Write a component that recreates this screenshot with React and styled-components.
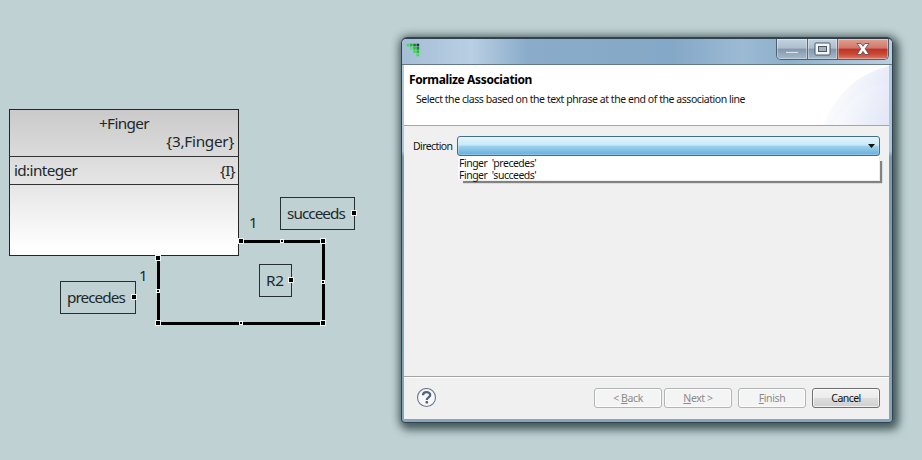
import React from 'react';
import styled, { createGlobalStyle } from 'styled-components';

const GlobalStyle = createGlobalStyle`
  * { box-sizing: border-box; }
  body { margin: 0; background: #bfd1d3; overflow: hidden; }
`;

const Desktop = styled.main`
  position: relative;
  width: 922px;
  height: 460px;
  overflow: hidden;
  background: #bfd1d3;
  color: #20282b;
  font-family: 'Noto Sans', sans-serif;
`;

const ClassNode = styled.section`
  position: absolute;
  left: 9px;
  top: 109px;
  width: 230px;
  height: 147px;
  border: 1px solid #252525;
  background: linear-gradient(#cacaca, #e6e6e6 52%, #fff 96%);
  font-size: 15.3px;
  line-height: 18px;
`;

const ClassHead = styled.header`
  display: flex;
  flex-direction: column;
  height: 47px;
  padding: 4px 4px 0;
  border-bottom: 1px solid #333;
`;

const ClassName = styled.div`
  text-align: center;
  letter-spacing: -0.62px;
`;

const Constraint = styled.div`
  text-align: right;
  letter-spacing: -0.25px;
`;

const Attribute = styled.div`
  display: flex;
  justify-content: space-between;
  height: 28px;
  padding: 4px 3px 0 4px;
  border-bottom: 1px solid #333;
  letter-spacing: -0.62px;
`;

const PhraseNode = styled.div`
  position: absolute;
  left: ${(p) => p.$x}px;
  top: ${(p) => p.$y}px;
  width: ${(p) => p.$w}px;
  height: 33px;
  border: 1px solid #263033;
  padding: 6px 0 0 6px;
  font-size: 15.3px;
  line-height: 18px;
  letter-spacing: ${(p) => p.$tracking}px;
  white-space: nowrap;
`;

const Multiplicity = styled.div`
  position: absolute;
  left: ${(p) => p.$x}px;
  top: ${(p) => p.$y}px;
  font-size: 15px;
  line-height: 18px;
`;

const Connector = styled.svg`
  position: absolute;
  left: 0;
  top: 0;
`;

const Window = styled.section`
  position: absolute;
  left: 401px;
  top: 37px;
  width: 492px;
  height: 386px;
  display: flex;
  flex-direction: column;
  border: 1px solid #31424e;
  border-top-width: 2px;
  border-radius: 6px 6px 4px 4px;
  padding: 0 3px 3px 2px;
  background: linear-gradient(#b7cde1 0, #a9c4de 112px, #7b98ad 118px, #86a6bc 100%);
  box-shadow: 3px 4px 9px 3px rgba(25, 45, 45, 0.62), 0 0 8px 2px rgba(40, 60, 60, 0.4);
  color: #151515;
`;

const TitleBar = styled.header`
  display: flex;
  justify-content: space-between;
  flex: none;
  height: 26px;
  margin: 0 -3px 0 -2px;
  padding: 0 3px 0 2px;
  border-bottom: 1px solid #65798a;
  border-radius: 4px 4px 0 0;
  background: linear-gradient(90deg, #a4bed6 0, #b9cfe3 70px, #8aacca 125px, #84a8c7 270px, #9cbad4 340px, #8db0cb 385px, #b8cfe2 100%);
`;

const Controls = styled.div`
  display: flex;
  height: 21px;
  border: 1px solid #4e6070;
  border-top: 0;
  border-radius: 0 0 5px 5px;
  overflow: hidden;
`;

const ControlButton = styled.button`
  display: flex;
  align-items: center;
  justify-content: center;
  width: ${(p) => p.$w}px;
  padding: 0;
  border: 0;
  border-right: ${(p) => (p.$close ? '0' : '1px solid #586a7b')};
  background: ${(p) =>
    p.$close
      ? 'linear-gradient(#e0a091, #d17767 46%, #bc3327 50%, #c94736 75%, #dc7b61)'
      : 'linear-gradient(#c5d3df, #acbdcc 46%, #8397ad 50%, #a5bacd)'};
  box-shadow: inset 0 0 0 1px rgba(255, 255, 255, 0.35);
`;

const Content = styled.div`
  display: flex;
  flex-direction: column;
  flex: 1;
  background: #f0f0f0;
`;

const Banner = styled.header`
  position: relative;
  flex: none;
  height: 61px;
  padding: 7px 0 0 5px;
  background: #fff;
  border-bottom: 1px solid #a4a6a8;
`;

const BannerArt = styled.svg`
  position: absolute;
  right: 0;
  top: 0;
`;

const Heading = styled.h1`
  position: relative;
  margin: 0;
  font-size: 12px;
  line-height: 16px;
  letter-spacing: -0.36px;
  color: #000;
`;

const Description = styled.p`
  position: relative;
  margin: 4px 0 0 7px;
  font-size: 10.5px;
  line-height: 15px;
  letter-spacing: -0.445px;
`;

const Form = styled.div`
  display: flex;
  flex: 1;
  padding: 10px 9px 0;
`;

const FieldLabel = styled.label`
  width: 44px;
  font-size: 10.5px;
  line-height: 20px;
  letter-spacing: -0.6px;
`;

const Picker = styled.div`
  flex: 1;
`;

const Combo = styled.div`
  display: flex;
  align-items: center;
  justify-content: flex-end;
  height: 20px;
  padding-right: 4px;
  border: 1px solid #416e8b;
  border-radius: 3px;
  background: linear-gradient(#e5f5fd, #c8e9f8 45%, #9dd2ee 51%, #66addb);
  box-shadow: inset 0 0 0 1px rgba(230, 250, 255, 0.3);
`;

const Options = styled.ul`
  height: 25px;
  margin: 0;
  padding: 1px 1px 0;
  list-style: none;
  background: #fff;
  border: 1px solid #eee;
  border-top: 0;
  box-shadow: 2px 2px 1px rgba(70, 70, 70, 0.65);
  clip-path: polygon(0 0, 100% 0, 100% 5px, 426px 5px, 426px 29px, 6px 29px, 6px 25px, 0 25px);
`;

const Option = styled.li`
  font-size: 10.5px;
  line-height: 12px;
  letter-spacing: -0.5px;
  white-space: pre;
`;

const Footer = styled.footer`
  display: flex;
  align-items: flex-start;
  height: 43px;
  padding: 11px 9px 0 12px;
  border-top: 1px solid #9fa3a5;
  box-shadow: inset 0 1px #fff;
`;

const Actions = styled.div`
  display: flex;
  gap: ${(p) => p.$gap}px;
  margin-left: ${(p) => p.$left};
`;

const Action = styled.button`
  width: 68px;
  height: 20px;
  padding: 1px 0 0;
  border: 1px solid ${(p) => (p.disabled ? '#b2b5b5' : '#707070')};
  border-radius: 3px;
  background: ${(p) => (p.disabled ? '#f4f4f4' : 'linear-gradient(#f3f3f3, #ebebeb 49%, #dddddd 51%, #cfcfcf)')};
  box-shadow: inset 0 0 0 1px rgba(255, 255, 255, 0.7);
  color: ${(p) => (p.disabled ? '#8b8b8b' : '#111')};
  font: 10.5px/17px 'Noto Sans', sans-serif;
  letter-spacing: ${(p) => (p.disabled ? '-0.4px' : '-0.55px')};
`;

const corners = [[241, 241], [323, 241], [323, 323], [158, 323], [158, 258], [354, 213], [291, 280], [134, 297]];
const midpoints = [[282, 241], [323, 282], [241, 323], [158, 291]];

function AssociationLine() {
  return (
    <Connector width="400" height="460" aria-hidden="true" shapeRendering="crispEdges">
      <path d="M241 241H323V323.5H158V258" fill="none" stroke="#000" strokeWidth="3" />
      {corners.map(([x, y]) => (
        <g key={`${x}-${y}`}>
          <rect x={x - 3} y={y - 3} width="6" height="6" fill="#eef5f5" />
          <rect x={x - 2} y={y - 2} width="4" height="4" fill="#000" />
        </g>
      ))}
      {midpoints.map(([x, y]) => (
        <g key={`${x}-${y}`}>
          <rect x={x - 2} y={y - 2} width="4" height="4" fill="#fff" />
          <rect x={x - 1} y={y - 1} width="2" height="2" fill="#000" />
        </g>
      ))}
    </Connector>
  );
}

const logoDots = [
  [1, 0, '#4fd55f'], [4, 0, '#21b936'], [7, 0, '#158326'], [10, 0, '#104d1b'],
  [4, 3, '#5fe36b'], [7, 3, '#20cb34'], [10, 3, '#168c26'],
  [7, 6, '#3fdf4c'], [10, 6, '#19c52e'], [10, 9, '#45dc50'],
];

function AppLogo() {
  return (
    <svg width="18" height="20" aria-hidden="true">
      {logoDots.map(([x, y, fill]) => (
        <rect key={`${x}-${y}`} x={x * 1.1 + 1.5} y={y * 1.1 + 4.7} width="2.7" height="2.7" fill={fill} />
      ))}
    </svg>
  );
}

function HelpIcon() {
  return (
    <svg width="21" height="21" viewBox="0 0 21 21" fill="none" aria-label="Help">
      <circle cx="10.5" cy="9.5" r="9" fill="#f7f8fa" stroke="#67758b" strokeWidth="1.1" />
      <path d="M7 7.3C7 3.2 14.2 3.1 14.2 7.1C14.2 9.5 10.8 9.2 10.8 12" stroke="#53637e" strokeWidth="2.3" />
      <rect x="9.5" y="13.1" width="2.6" height="2.5" rx=".7" fill="#53637e" />
    </svg>
  );
}

export default function App() {
  return (
    <>
      <GlobalStyle />
      <Desktop>
        <ClassNode>
          <ClassHead>
            <ClassName>+Finger</ClassName>
            <Constraint>{'{3,Finger}'}</Constraint>
          </ClassHead>
          <Attribute><span>id:integer</span><span>{'{I}'}</span></Attribute>
        </ClassNode>
        <PhraseNode $x={280} $y={197} $w={75} $tracking={-0.95}>succeeds</PhraseNode>
        <PhraseNode $x={259} $y={264} $w={33} $tracking={-0.3}>R2</PhraseNode>
        <PhraseNode $x={60} $y={281} $w={76} $tracking={-0.95}>precedes</PhraseNode>
        <Multiplicity $x={249} $y={213}>1</Multiplicity>
        <Multiplicity $x={139} $y={266}>1</Multiplicity>
        <AssociationLine />

        <Window>
          <TitleBar>
            <AppLogo />
            <Controls>
              <ControlButton $w={31} aria-label="Minimize">
                <svg width="16" height="18"><rect x="1.5" y="11.5" width="13" height="2" fill="#dce5ec" stroke="#8294a5" strokeWidth=".6" /></svg>
              </ControlButton>
              <ControlButton $w={30} aria-label="Maximize">
                <svg width="17" height="14">
                  <rect x="1" y="1" width="15" height="12" rx="1" fill="#f2f5f7" stroke="#4c5967" />
                  <rect x="4.5" y="4.5" width="8" height="5" fill="#a5b2be" stroke="#4c5967" />
                </svg>
              </ControlButton>
              <ControlButton $w={50} $close aria-label="Close">
                <svg width="14" height="14" viewBox="0 0 14 14">
                  <path d="M1 1.5H5L7 4.3L9 1.5H13L9.2 6.8L13 12.5H9L7 9.4L5 12.5H1L4.8 6.8Z" fill="#fff" stroke="#65434a" strokeWidth=".8" />
                </svg>
              </ControlButton>
            </Controls>
          </TitleBar>
          <Content>
            <Banner>
              <BannerArt width="66" height="60" aria-hidden="true">
                <defs>
                  <linearGradient id="sweep" x1="0" y1=".4" x2="1" y2=".7">
                    <stop stopColor="#fff" />
                    <stop offset="1" stopColor="#e2e8f7" />
                  </linearGradient>
                </defs>
                <path d="M0 60C13 29 34 9 66 1V60Z" fill="url(#sweep)" />
                <path d="M10 60C25 36 43 19 66 18V60Z" fill="url(#sweep)" opacity=".7" />
              </BannerArt>
              <Heading>Formalize Association</Heading>
              <Description>Select the class based on the text phrase at the end of the association line</Description>
            </Banner>
            <Form>
              <FieldLabel>Direction</FieldLabel>
              <Picker>
                <Combo><svg width="7" height="4"><path d="M0 0H7L3.5 4Z" fill="#111" /></svg></Combo>
                <Options>
                  <Option>{"Finger  'precedes'"}</Option>
                  <Option>{"Finger  'succeeds'"}</Option>
                </Options>
              </Picker>
            </Form>
            <Footer>
              <HelpIcon />
              <Actions $gap={2} $left="auto">
                <Action disabled>&lt; <u>B</u>ack</Action>
                <Action disabled><u>N</u>ext &gt;</Action>
              </Actions>
              <Actions $gap={6} $left="6px">
                <Action disabled><u>F</u>inish</Action>
                <Action>Cancel</Action>
              </Actions>
            </Footer>
          </Content>
        </Window>
      </Desktop>
    </>
  );
}
